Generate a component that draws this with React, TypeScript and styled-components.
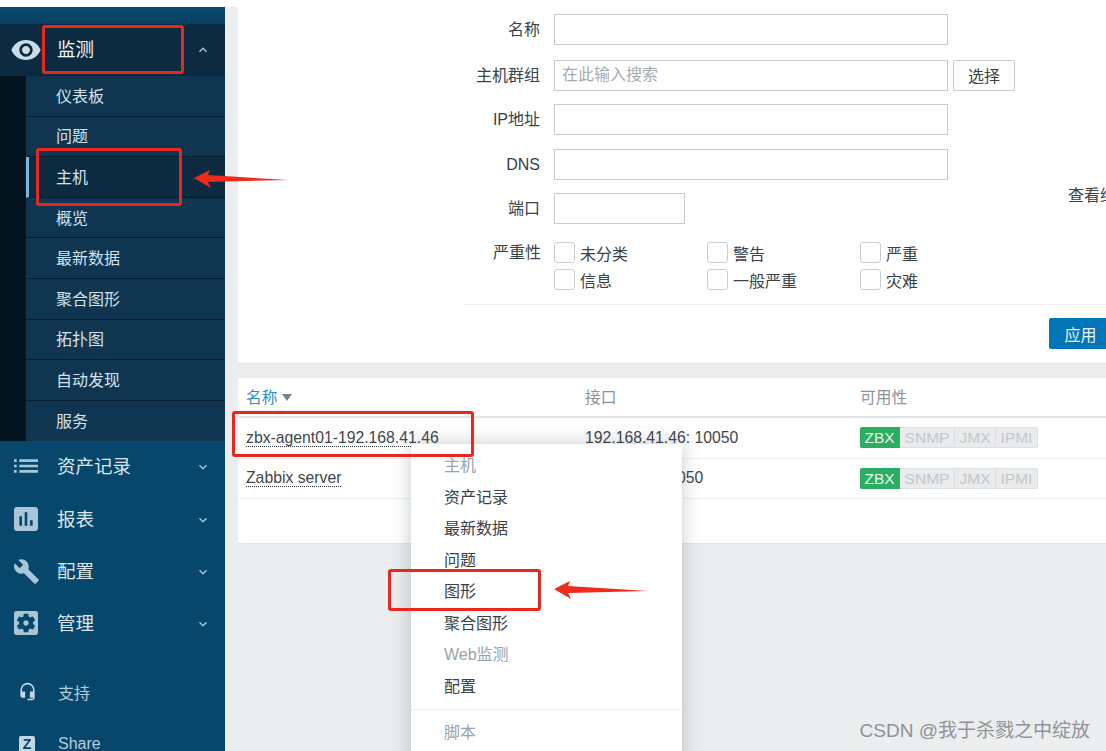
import React from "react";
import styled, { createGlobalStyle } from "styled-components";
import {
  MdAssessment,
  MdBuild,
  MdHeadsetMic,
  MdKeyboardArrowDown,
  MdKeyboardArrowUp,
  MdList,
  MdRemoveRedEye,
  MdSettingsApplications,
} from "react-icons/md";

const FONT = `"Liberation Sans", "Noto Sans CJK SC", sans-serif`;

const GlobalStyle = createGlobalStyle`
  html, body {
    margin: 0;
    padding: 0;
    background: #fff;
    font-family: ${FONT};
  }
`;

const Page = styled.div`
  position: relative;
  width: 1106px;
  height: 751px;
  overflow: hidden;
  display: flex;
  flex-direction: column;
  background: #fff;
  color: #3a4147;
`;

const Body = styled.div`
  flex: 1;
  min-height: 0;
  margin-top: 7px;
  display: flex;
`;

/* sidebar */
const Sidebar = styled.aside`
  width: 225px;
  flex: none;
  overflow: hidden;
  display: flex;
  flex-direction: column;
  background: #07476c;
  color: #dbe7ee;
`;

const LogoStrip = styled.div`
  height: 17px;
  flex: none;
  background: linear-gradient(#0a4b72, #083f60);
`;

const OpenGroup = styled.div`
  flex: none;
  background: #04141e;
`;

const GroupHead = styled.div<{ $open?: boolean }>`
  height: ${(p) => (p.$open ? "52px" : "52.3px")};
  flex: none;
  display: flex;
  align-items: center;
  padding-left: 12px;
  font-size: 18.5px;
  background: ${(p) => (p.$open ? "#0c2b40" : "transparent")};
  color: ${(p) => (p.$open ? "#f1f5f8" : "#dbe7ee")};
`;

const GroupIcon = styled.span<{ $bright?: boolean }>`
  width: 28px;
  margin-right: 17px;
  margin-bottom: ${(p) => (p.$bright ? "0" : "2px")};
  display: flex;
  justify-content: center;
  color: ${(p) => (p.$bright ? "#c9dde8" : "#a9c6d8")};
  svg {
    display: block;
    flex: none;
  }
`;

const GroupLabel = styled.span`
  flex: 1;
  margin-bottom: 4px;
`;

const Caret = styled.span`
  margin-right: 14px;
  display: flex;
  color: #a9c6d8;
`;

const SubList = styled.ul`
  list-style: none;
  margin: 0 0 0 26px;
  padding: 0;
`;

const SubItem = styled.li<{ $active?: boolean }>`
  height: 40.6px;
  box-sizing: border-box;
  display: flex;
  align-items: center;
  padding-left: ${(p) => (p.$active ? "27px" : "30px")};
  padding-bottom: 2px;
  font-size: 16px;
  color: #d6e2ea;
  background: ${(p) => (p.$active ? "#0c2b40" : "#0f3550")};
  border-bottom: 1px solid #07202f;
  border-left: ${(p) => (p.$active ? "3px solid #79b6dd" : "none")};
  &:last-child {
    border-bottom: none;
  }
`;

const Footer = styled.div`
  flex: none;
  margin-top: 15px;
`;

const FooterItem = styled.div`
  height: 52px;
  display: flex;
  align-items: center;
  padding-left: 15px;
  font-size: 16px;
  color: #b5cddb;
`;

const FooterIcon = styled.span`
  width: 24px;
  margin-right: 19px;
  display: flex;
  justify-content: center;
  color: #c4d8e4;
`;

const ZBox = styled.span`
  width: 16px;
  height: 16px;
  border-radius: 2px;
  background: #c4d8e4;
  color: #07476c;
  font-size: 14px;
  font-weight: bold;
  line-height: 16px;
  text-align: center;
`;

/* content */
const Main = styled.main`
  flex: 1;
  min-width: 0;
  padding-left: 13px;
  background: #ebedee;
`;

const FilterPanel = styled.section`
  height: 357px;
  box-sizing: border-box;
  background: #fff;
  border-bottom: 1px solid #dfe3e6;
  padding-top: 7px;
  display: flex;
  flex-direction: column;
`;

const FilterColumns = styled.div`
  display: flex;
`;

const FilterForm = styled.div`
  width: 830px;
  flex: none;
`;

const SideNote = styled.div`
  margin-top: 168px;
  font-size: 16px;
  white-space: nowrap;
  overflow: hidden;
  color: #3a4147;
`;

const FormRow = styled.div<{ $gap: number }>`
  display: flex;
  align-items: center;
  margin-bottom: ${(p) => p.$gap}px;
`;

const RowLabel = styled.label<{ $latin?: boolean }>`
  width: 302px;
  margin-right: 14px;
  padding-bottom: ${(p) => (p.$latin ? "0" : "3px")};
  text-align: right;
  font-size: 16px;
  color: #3a4147;
`;

const Input = styled.div<{ $short?: boolean }>`
  width: ${(p) => (p.$short ? "131px" : "394px")};
  height: 31px;
  box-sizing: border-box;
  border: 1px solid #c7c9cb;
  padding-left: 7px;
  font-size: 16px;
  line-height: 27px;
  color: #a6abaf;
`;

const SelectButton = styled.button`
  width: 62px;
  height: 31px;
  margin-left: 5px;
  padding: 0 0 2px;
  background: #fff;
  border: 1px solid #c7c9cb;
  border-radius: 2px;
  font: 16px ${FONT};
  color: #3a4147;
`;

const SeverityRow = styled.div`
  display: flex;
`;

const SeverityLabel = styled(RowLabel)`
  width: 303px;
  margin-right: 13px;
  padding-bottom: 0;
  line-height: 21px;
`;

const SeverityGrid = styled.div`
  display: grid;
  grid-template-columns: repeat(3, 153px);
  grid-auto-rows: 21px;
  row-gap: 6px;
`;

const Check = styled.div`
  display: flex;
  align-items: center;
  font-size: 16px;
  color: #3a4147;
`;

const CheckBox = styled.span`
  width: 21px;
  height: 21px;
  box-sizing: border-box;
  margin-right: 5px;
  border: 1px solid #c9ced2;
  border-radius: 3px;
`;

const FilterActions = styled.div`
  margin: 14px 0 0 225px;
  padding-top: 13px;
  border-top: 1px solid #eef0f2;
  display: flex;
  justify-content: flex-end;
`;

const ApplyButton = styled.button`
  width: 70px;
  height: 31px;
  margin-right: -13px;
  padding: 0 7px 0 0;
  background: #0275b8;
  border: none;
  border-radius: 2px;
  color: #e8f3fa;
  font: 16px ${FONT};
`;

const TablePanel = styled.section`
  margin-top: 14px;
  height: 165px;
  background: #fff;
  border-bottom: 1px solid #e2e5e8;
`;

const HostTable = styled.div`
  display: grid;
  grid-template-columns: 339px 275px 1fr;
  padding-left: 8px;
  font-size: 15.75px;
`;

const HeadCell = styled.div<{ $link?: boolean }>`
  height: 36px;
  display: flex;
  align-items: center;
  gap: 4px;
  margin-left: -8px;
  padding: 0 0 2px 8px;
  border-bottom: 2px solid #dfe5ea;
  color: ${(p) => (p.$link ? "#2f8fc7" : "#8b939a")};
`;

const SortArrow = styled.span`
  width: 0;
  height: 0;
  margin-top: 3px;
  border-left: 5px solid transparent;
  border-right: 5px solid transparent;
  border-top: 7px solid #76828c;
`;

const Cell = styled.div`
  height: 39.5px;
  display: flex;
  align-items: center;
  margin-left: -8px;
  padding-left: 8px;
  border-bottom: 1px solid #edf0f2;
  color: #3f464c;
`;

const HostName = styled.span`
  line-height: 17px;
  border-bottom: 1px dotted #2b3136;
`;

const Badges = styled.div`
  display: flex;
  height: 21px;
`;

const Badge = styled.span<{ $on?: boolean; $w: number }>`
  width: ${(p) => p.$w}px;
  box-sizing: border-box;
  line-height: 19px;
  text-align: center;
  font-size: 15.5px;
  background: ${(p) => (p.$on ? "#2bad62" : "#e9ebec")};
  color: ${(p) => (p.$on ? "#e6f7ec" : "#c2c8cc")};
  border: 1px solid ${(p) => (p.$on ? "#2bad62" : "#dcdfe1")};
  border-left: none;
  &:first-child {
    border-radius: 2px 0 0 2px;
  }
  &:last-child {
    border-radius: 0 2px 2px 0;
  }
`;

/* popup menu, lies over the table */
const PopupMenu = styled.ul`
  position: absolute;
  left: 411px;
  top: 444px;
  width: 271px;
  height: 340px;
  margin: 0;
  padding: 6px 0 0;
  list-style: none;
  box-sizing: border-box;
  background: #fff;
  box-shadow: 0 0 18px rgba(60, 80, 95, 0.3);
`;

const MenuItem = styled.li<{ $muted?: boolean }>`
  height: 31.5px;
  padding-left: 33px;
  line-height: 31.5px;
  font-size: 16px;
  color: ${(p) => (p.$muted ? "#98a3ab" : "#3a4147")};
`;

const MenuDivider = styled.li`
  height: 1px;
  margin: 7px 0 7px;
  background: #eceff1;
`;

/* hand-drawn marks on top of the screenshot */
const RedBox = styled.div<{ $x: number; $y: number; $w: number; $h: number }>`
  position: absolute;
  left: ${(p) => p.$x}px;
  top: ${(p) => p.$y}px;
  width: ${(p) => p.$w}px;
  height: ${(p) => p.$h}px;
  box-sizing: border-box;
  border: 3px solid #e9281d;
  border-radius: 3px;
`;

const Arrow = styled.svg<{ $x: number; $y: number }>`
  position: absolute;
  left: ${(p) => p.$x}px;
  top: ${(p) => p.$y}px;
`;

const Watermark = styled.div`
  position: absolute;
  right: 16px;
  top: 720px;
  font-size: 19px;
  line-height: 22px;
  color: #8f9397;
`;

const subItems = ["仪表板", "问题", "主机", "概览", "最新数据", "聚合图形", "拓扑图", "自动发现", "服务"];

const groups = [
  { label: "资产记录", icon: <MdList size={32} /> },
  { label: "报表", icon: <MdAssessment size={32} /> },
  { label: "配置", icon: <MdBuild size={27} /> },
  { label: "管理", icon: <MdSettingsApplications size={32} /> },
];

const severities = ["未分类", "警告", "严重", "信息", "一般严重", "灾难"];

const badges = [
  { text: "ZBX", w: 40, on: true },
  { text: "SNMP", w: 55 },
  { text: "JMX", w: 41 },
  { text: "IPMI", w: 42 },
];

const hosts = [
  { name: "zbx-agent01-192.168.41.46", iface: "192.168.41.46: 10050" },
  { name: "Zabbix server", iface: "127.0.0.1: 10050" },
];

const menu = [
  { text: "主机", muted: true },
  { text: "资产记录" },
  { text: "最新数据" },
  { text: "问题" },
  { text: "图形" },
  { text: "聚合图形" },
  { text: "Web监测", muted: true },
  { text: "配置" },
];

function RedArrow({ x, y }: { x: number; y: number }) {
  return (
    <Arrow $x={x} $y={y} width="96" height="20" viewBox="0 0 96 20">
      <polygon points="0,9 16,1 14,6 94,11 14,13 17,19" fill="#ee2a1c" />
    </Arrow>
  );
}

function Availability() {
  return (
    <Badges>
      {badges.map((b) => (
        <Badge key={b.text} $on={b.on} $w={b.w}>
          {b.text}
        </Badge>
      ))}
    </Badges>
  );
}

export default function App() {
  return (
    <Page>
      <GlobalStyle />
      <Body>
        <Sidebar>
          <LogoStrip />
          <OpenGroup>
            <GroupHead $open>
              <GroupIcon $bright>
                <MdRemoveRedEye size={32} />
              </GroupIcon>
              <GroupLabel>监测</GroupLabel>
              <Caret>
                <MdKeyboardArrowUp size={16} />
              </Caret>
            </GroupHead>
            <SubList>
              {subItems.map((item) => (
                <SubItem key={item} $active={item === "主机"}>
                  {item}
                </SubItem>
              ))}
            </SubList>
          </OpenGroup>
          {groups.map((g) => (
            <GroupHead key={g.label}>
              <GroupIcon>{g.icon}</GroupIcon>
              <GroupLabel>{g.label}</GroupLabel>
              <Caret>
                <MdKeyboardArrowDown size={16} />
              </Caret>
            </GroupHead>
          ))}
          <Footer>
            <FooterItem>
              <FooterIcon>
                <MdHeadsetMic size={19} />
              </FooterIcon>
              支持
            </FooterItem>
            <FooterItem>
              <FooterIcon>
                <ZBox>Z</ZBox>
              </FooterIcon>
              Share
            </FooterItem>
          </Footer>
        </Sidebar>
        <Main>
          <FilterPanel>
            <FilterColumns>
              <FilterForm>
                <FormRow $gap={15}>
                  <RowLabel>名称</RowLabel>
                  <Input />
                </FormRow>
                <FormRow $gap={13}>
                  <RowLabel>主机群组</RowLabel>
                  <Input>在此输入搜索</Input>
                  <SelectButton>选择</SelectButton>
                </FormRow>
                <FormRow $gap={14}>
                  <RowLabel>IP地址</RowLabel>
                  <Input />
                </FormRow>
                <FormRow $gap={13}>
                  <RowLabel $latin>DNS</RowLabel>
                  <Input />
                </FormRow>
                <FormRow $gap={18}>
                  <RowLabel>端口</RowLabel>
                  <Input $short />
                </FormRow>
                <SeverityRow>
                  <SeverityLabel>严重性</SeverityLabel>
                  <SeverityGrid>
                    {severities.map((s) => (
                      <Check key={s}>
                        <CheckBox />
                        {s}
                      </Check>
                    ))}
                  </SeverityGrid>
                </SeverityRow>
              </FilterForm>
              <SideNote>查看维护</SideNote>
            </FilterColumns>
            <FilterActions>
              <ApplyButton>应用</ApplyButton>
            </FilterActions>
          </FilterPanel>
          <TablePanel>
            <HostTable>
              <HeadCell $link>
                名称
                <SortArrow />
              </HeadCell>
              <HeadCell>接口</HeadCell>
              <HeadCell>可用性</HeadCell>
              {hosts.map((h) => (
                <React.Fragment key={h.name}>
                  <Cell>
                    <HostName>{h.name}</HostName>
                  </Cell>
                  <Cell>{h.iface}</Cell>
                  <Cell>
                    <Availability />
                  </Cell>
                </React.Fragment>
              ))}
            </HostTable>
          </TablePanel>
        </Main>
      </Body>
      <PopupMenu>
        {menu.map((m) => (
          <MenuItem key={m.text} $muted={m.muted}>
            {m.text}
          </MenuItem>
        ))}
        <MenuDivider />
        <MenuItem $muted>脚本</MenuItem>
      </PopupMenu>
      <RedBox $x={42} $y={25} $w={142} $h={49} />
      <RedBox $x={36} $y={148} $w={146} $h={58} />
      <RedBox $x={232} $y={411} $w={242} $h={46} />
      <RedBox $x={388} $y={569} $w={153} $h={42} />
      <RedArrow x={194} y={169} />
      <RedArrow x={554} y={580} />
      <Watermark>CSDN @我于杀戮之中绽放</Watermark>
    </Page>
  );
}
